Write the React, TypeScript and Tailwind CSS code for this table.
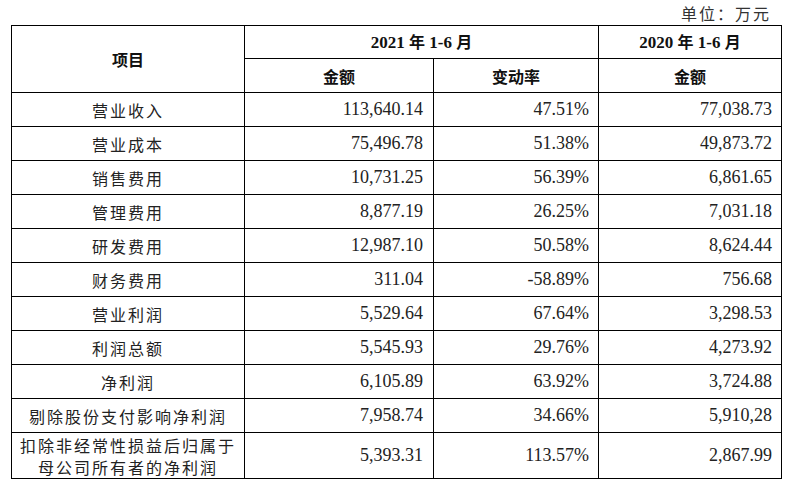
import React from "react";

type Row = {
  name: string[];
  amount: string;
  rate: string;
  prev: string;
};

const rows: Row[] = [
  { name: ["营业收入"], amount: "113,640.14", rate: "47.51%", prev: "77,038.73" },
  { name: ["营业成本"], amount: "75,496.78", rate: "51.38%", prev: "49,873.72" },
  { name: ["销售费用"], amount: "10,731.25", rate: "56.39%", prev: "6,861.65" },
  { name: ["管理费用"], amount: "8,877.19", rate: "26.25%", prev: "7,031.18" },
  { name: ["研发费用"], amount: "12,987.10", rate: "50.58%", prev: "8,624.44" },
  { name: ["财务费用"], amount: "311.04", rate: "-58.89%", prev: "756.68" },
  { name: ["营业利润"], amount: "5,529.64", rate: "67.64%", prev: "3,298.53" },
  { name: ["利润总额"], amount: "5,545.93", rate: "29.76%", prev: "4,273.92" },
  { name: ["净利润"], amount: "6,105.89", rate: "63.92%", prev: "3,724.88" },
  { name: ["剔除股份支付影响净利润"], amount: "7,958.74", rate: "34.66%", prev: "5,910,28" },
  {
    name: ["扣除非经常性损益后归属于", "母公司所有者的净利润"],
    amount: "5,393.31",
    rate: "113.57%",
    prev: "2,867.99",
  },
];

const serif = "font-['Liberation_Serif','Noto_Sans_CJK_SC',serif]";
const cjk = "font-['Noto_Sans_CJK_SC',sans-serif]";

export default function App() {
  return (
    <div className="h-[483px] w-[785px] bg-white text-[#111]">
      <div className="flex h-[25px] items-center justify-end pr-[14px]">
        <span className={`${cjk} text-[16px] tracking-[2px] text-[#333]`}>单位：万元</span>
      </div>
      <table className="ml-[11px] w-[770px] table-fixed border-collapse">
        <colgroup>
          <col className="w-[233px]" />
          <col className="w-[189px]" />
          <col className="w-[165px]" />
          <col className="w-[183px]" />
        </colgroup>
        <thead>
          <tr className="h-[33px]">
            <th rowSpan={2} className={`${cjk} border border-black text-center text-[16px] font-bold`}>
              项目
            </th>
            <th colSpan={2} className={`${serif} border border-black text-center text-[17px] font-bold`}>
              2021 <span className={cjk + " text-[16px]"}>年</span> 1-6 <span className={cjk + " text-[16px]"}>月</span>
            </th>
            <th className={`${serif} border border-black text-center text-[17px] font-bold`}>
              2020 <span className={cjk + " text-[16px]"}>年</span> 1-6 <span className={cjk + " text-[16px]"}>月</span>
            </th>
          </tr>
          <tr className="h-[34px]">
            <th className={`${cjk} border border-black text-center text-[16px] font-bold`}>金额</th>
            <th className={`${cjk} border border-black text-center text-[16px] font-bold`}>变动率</th>
            <th className={`${cjk} border border-black text-center text-[16px] font-bold`}>金额</th>
          </tr>
        </thead>
        <tbody>
          {rows.map((r) => (
            <tr key={r.name.join("")} className={r.name.length > 1 ? "h-[46px]" : "h-[34px]"}>
              <td className={`${cjk} border border-black text-center text-[16px] leading-[22px] tracking-[2px] text-[#222]`}>
                {r.name.map((n) => (
                  <div key={n}>{n}</div>
                ))}
              </td>
              <td className={`${serif} border border-black pr-[10px] text-right text-[18px] text-[#222]`}>
                {r.amount}
              </td>
              <td className={`${serif} border border-black pr-[9px] text-right text-[18px] text-[#222]`}>
                {r.rate}
              </td>
              <td className={`${serif} border border-black pr-[9px] text-right text-[18px] text-[#222]`}>
                {r.prev}
              </td>
            </tr>
          ))}
        </tbody>
      </table>
    </div>
  );
}
